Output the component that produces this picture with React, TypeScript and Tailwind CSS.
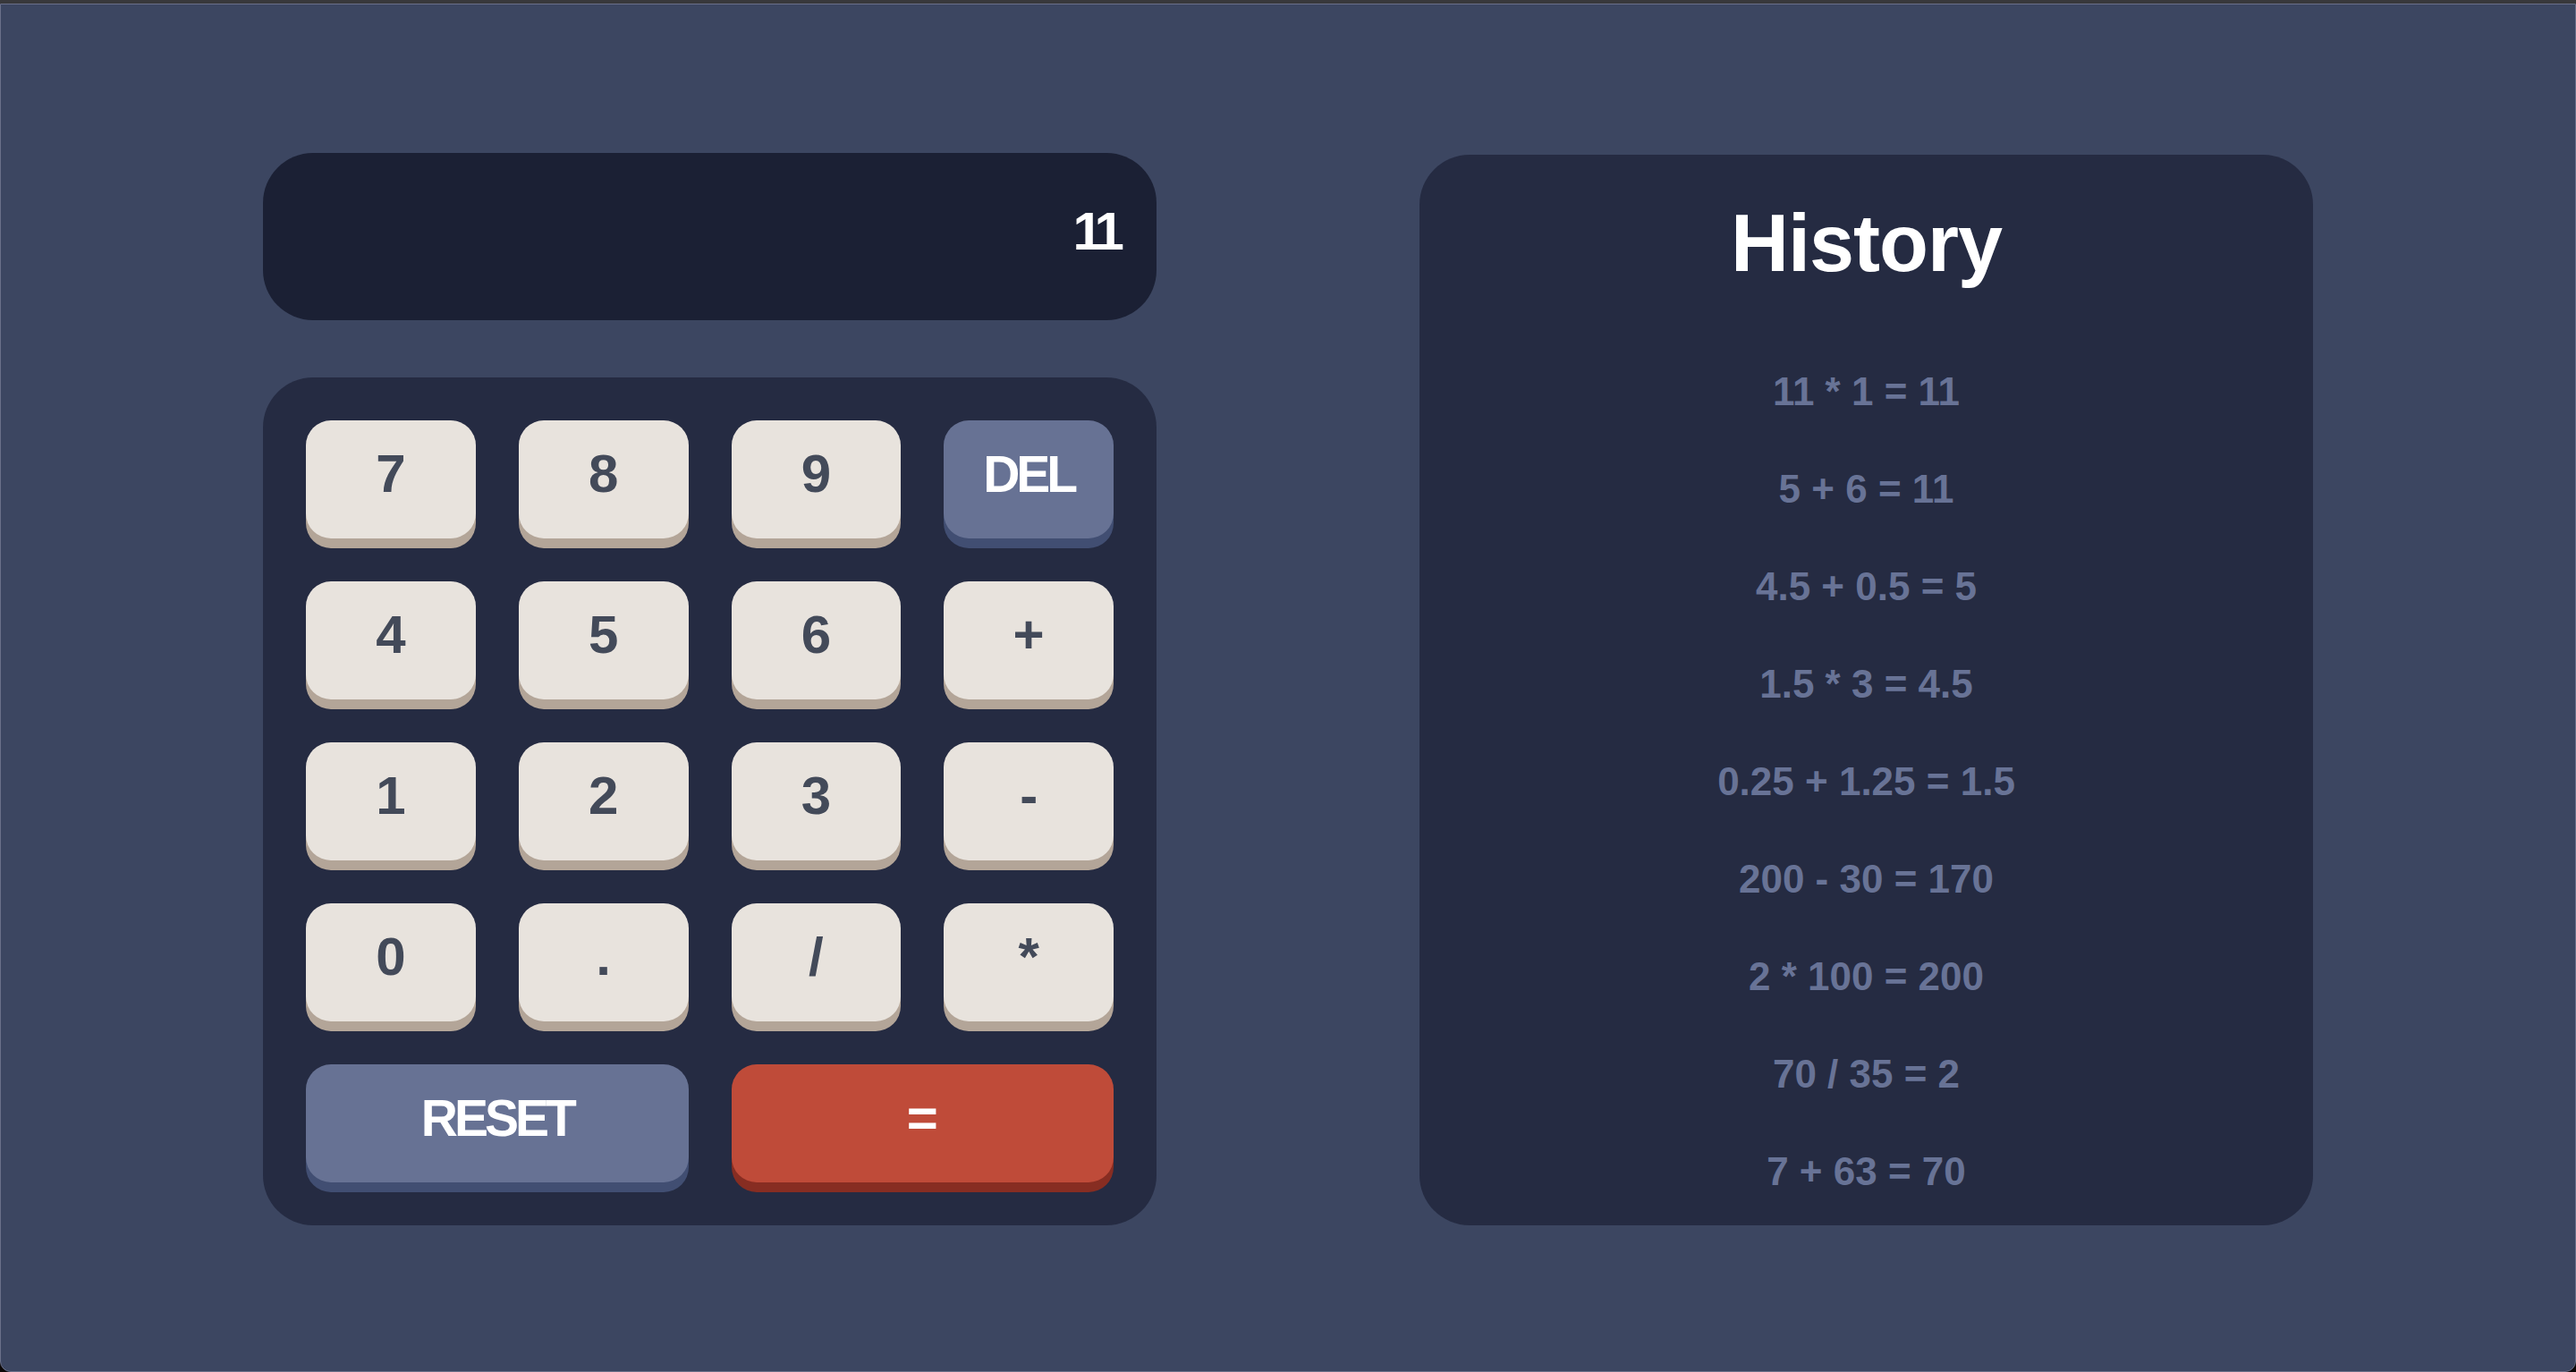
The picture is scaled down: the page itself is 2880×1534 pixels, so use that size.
import React from 'react';

// Calculator with history side panel

const keyFont = { fontFamily: '"Liberation Sans", Arial, sans-serif' };

type KeyKind = 'light' | 'blue' | 'red';

interface KeyDef {
  label: string;
  kind: KeyKind;
  wide?: boolean;
}

const keys: KeyDef[] = [
  { label: '7', kind: 'light' },
  { label: '8', kind: 'light' },
  { label: '9', kind: 'light' },
  { label: 'DEL', kind: 'blue' },
  { label: '4', kind: 'light' },
  { label: '5', kind: 'light' },
  { label: '6', kind: 'light' },
  { label: '+', kind: 'light' },
  { label: '1', kind: 'light' },
  { label: '2', kind: 'light' },
  { label: '3', kind: 'light' },
  { label: '-', kind: 'light' },
  { label: '0', kind: 'light' },
  { label: '.', kind: 'light' },
  { label: '/', kind: 'light' },
  { label: '*', kind: 'light' },
  { label: 'RESET', kind: 'blue', wide: true },
  { label: '=', kind: 'red', wide: true },
];

const history = [
  '11 * 1 = 11',
  '5 + 6 = 11',
  '4.5 + 0.5 = 5',
  '1.5 * 3 = 4.5',
  '0.25 + 1.25 = 1.5',
  '200 - 30 = 170',
  '2 * 100 = 200',
  '70 / 35 = 2',
  '7 + 63 = 70',
];

const Key = ({ label, kind, wide }: KeyDef) => {
  const styles: Record<KeyKind, string> = {
    light: 'bg-[#e8e3dd] text-[#434a59] shadow-[0_11px_0_#b3a598]',
    blue: 'bg-[#677294] text-white shadow-[0_11px_0_#414e72]',
    red: 'bg-[#bf4b39] text-white shadow-[0_11px_0_#872d22]',
  };
  const isWord = label.length > 1;
  return (
    <button
      className={`${wide ? 'col-span-2' : ''} ${styles[kind]} ${isWord ? 'text-[57px] tracking-[-4px]' : 'text-[60px]'} h-[132px] rounded-[28px] flex items-center justify-center pb-[12px] font-bold leading-none`}
      style={keyFont}
    >
      {label}
    </button>
  );
};

export default function App() {
  return (
    <div className="w-full h-[1534px] bg-[#0c0808] flex flex-col overflow-hidden">
      {/* window title strip */}
      <div className="h-[4px] bg-[#38383b] shrink-0" />

      <div className="flex-1 bg-[#3c4661] border border-[#6a7089] rounded-b-[12px] flex items-start justify-center gap-[294px] pt-[166px]">
        {/* Calculator */}
        <div className="w-[999px] flex flex-col gap-[64px]">
          <div
            className="h-[187px] rounded-[56px] bg-[#1b2034] flex items-center justify-end pr-[42px] pb-[12px] text-white text-[60px] font-bold leading-none tracking-[-6px]"
            style={keyFont}
          >
            11
          </div>

          <div className="rounded-[56px] bg-[#252b42] p-[48px] grid grid-cols-4 gap-[48px]">
            {keys.map((k) => (
              <Key key={k.label} {...k} />
            ))}
          </div>
        </div>

        {/* History */}
        <div className="w-[999px] h-[1197px] mt-[2px] rounded-[56px] bg-[#252b42] flex flex-col items-center pt-[54px]" style={keyFont}>
          <h1 className="text-white text-[90px] font-bold leading-none tracking-[-1px]">History</h1>
          <ul className="mt-[66px] flex flex-col items-center">
            {history.map((h) => (
              <li key={h} className="h-[109px] flex items-center text-[44px] font-bold text-[#687396]">
                {h}
              </li>
            ))}
          </ul>
        </div>
      </div>
    </div>
  );
}
